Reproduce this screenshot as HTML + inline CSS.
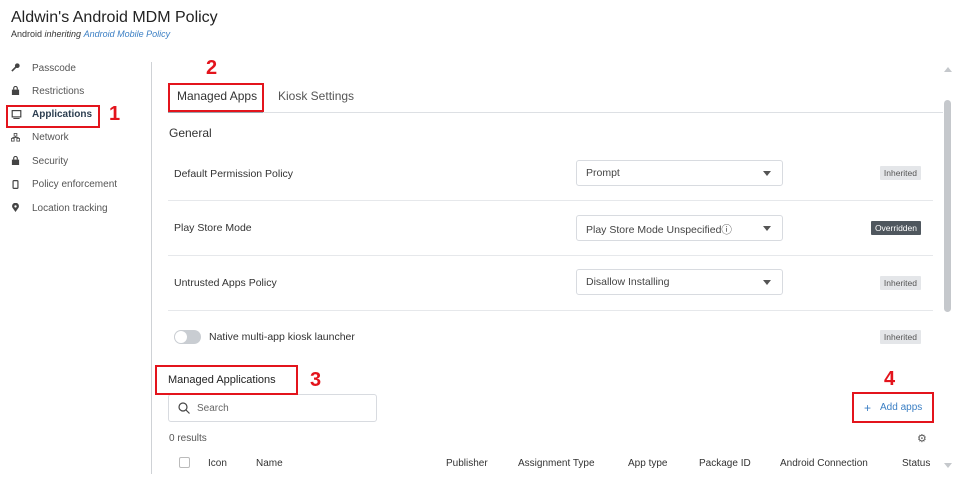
<!DOCTYPE html>
<html><head><meta charset="utf-8"><style>
*{margin:0;padding:0;box-sizing:border-box}
body{width:975px;height:495px;background:#fff;font-family:"Liberation Sans",sans-serif;color:#333;position:relative;overflow:hidden}
.a{position:absolute;white-space:nowrap}
.nav{font-size:10px;color:#555}
.ic{position:absolute;left:11px;width:9px;height:9px}
.red{position:absolute;border:2.5px solid #e3141c}
.num{position:absolute;color:#e3141c;font-weight:bold;font-size:20px}
.lbl{font-size:10.5px;color:#333}
.sel{position:absolute;left:576px;width:207px;height:26px;border:1px solid #d8dbe0;border-radius:3px;font-size:10.5px;color:#444;padding:6px 9px}
.sel:after{content:"";position:absolute;right:11px;top:10px;border-left:4px solid transparent;border-right:4px solid transparent;border-top:5px solid #555}
.sep{position:absolute;left:168px;width:765px;height:1px;background:#e6e8eb}
.bd{position:absolute;right:54px;font-size:8.5px;padding:2px 4px;background:#e4e6e9;color:#555;border-radius:1px}
.th{position:absolute;top:458px;font-size:10px;color:#333}
</style></head><body>
<div class="a" style="left:11px;top:9px;font-size:16px;color:#222">Aldwin's Android MDM Policy</div>
<div class="a" style="left:11px;top:29px;font-size:9px;color:#333">Android <i>inheriting</i> <i style="color:#3b7fc4">Android Mobile Policy</i></div>

<svg class="ic" style="top:63px" viewBox="0 0 10 10"><circle cx="7" cy="3" r="2.6" fill="#444"/><path d="M6 4 L1 9" stroke="#444" stroke-width="1.8"/></svg>
<div class="a nav" style="left:32px;top:63px">Passcode</div>
<svg class="ic" style="top:86px" viewBox="0 0 10 10"><rect x="1" y="4" width="8" height="6" fill="#444"/><path d="M3 4V2.5a2 2 0 0 1 4 0V4" stroke="#444" fill="none" stroke-width="1.3"/></svg>
<div class="a nav" style="left:32px;top:86px">Restrictions</div>
<svg class="ic" style="top:110px;width:11px" viewBox="0 0 11 10"><rect x="0.7" y="0.7" width="9.6" height="7" fill="none" stroke="#333" stroke-width="1.2"/><path d="M2 9.5h7" stroke="#333"/></svg>
<div class="a nav" style="left:32px;top:109px;font-weight:bold;color:#2c3e50">Applications</div>
<svg class="ic" style="top:133px" viewBox="0 0 10 10" fill="none" stroke="#555"><rect x="3.5" y="0.5" width="3" height="3"/><rect x="0.5" y="6" width="3" height="3"/><rect x="6.5" y="6" width="3" height="3"/><path d="M5 3.5v1.5M2 6V5h6v1"/></svg>
<div class="a nav" style="left:32px;top:132px">Network</div>
<svg class="ic" style="top:156px" viewBox="0 0 10 10"><rect x="1" y="4" width="8" height="6" fill="#444"/><path d="M3 4V2.5a2 2 0 0 1 4 0V4" stroke="#444" fill="none" stroke-width="1.3"/></svg>
<div class="a nav" style="left:32px;top:156px">Security</div>
<svg class="ic" style="top:180px" viewBox="0 0 10 10"><rect x="2.3" y="0.7" width="5.4" height="8.6" rx="1" fill="none" stroke="#444" stroke-width="1.3"/></svg>
<div class="a nav" style="left:32px;top:179px">Policy enforcement</div>
<svg class="ic" style="top:203px" viewBox="0 0 10 10"><path d="M5 10 L1.5 5 A3.8 3.8 0 1 1 8.5 5Z" fill="#444"/><circle cx="5" cy="3.8" r="1.3" fill="#fff"/></svg>
<div class="a nav" style="left:32px;top:203px">Location tracking</div>

<div class="a" style="left:151px;top:62px;width:1px;height:412px;background:#cfd2d6"></div>

<div class="a" style="left:177px;top:89px;font-size:12px;color:#333">Managed Apps</div>
<div class="a" style="left:278px;top:89px;font-size:12px;color:#555">Kiosk Settings</div>
<div class="a" style="left:168px;top:112px;width:775px;height:1px;background:#dde0e4"></div>
<div class="a" style="left:168px;top:111px;width:95px;height:2px;background:#9aa3ad"></div>

<div class="a" style="left:169px;top:126px;font-size:12px;color:#333">General</div>

<div class="a lbl" style="left:174px;top:168px">Default Permission Policy</div>
<div class="sel" style="top:160px">Prompt</div>
<div class="bd" style="top:166px">Inherited</div>
<div class="sep" style="top:200px"></div>

<div class="a lbl" style="left:174px;top:222px">Play Store Mode</div>
<div class="sel" style="top:215px">Play Store Mode Unspecified&#9432;</div>
<div class="bd" style="top:221px;background:#4f575e;color:#fff">Overridden</div>
<div class="sep" style="top:255px"></div>

<div class="a lbl" style="left:174px;top:277px">Untrusted Apps Policy</div>
<div class="sel" style="top:269px">Disallow Installing</div>
<div class="bd" style="top:276px">Inherited</div>
<div class="sep" style="top:310px"></div>

<div class="a" style="left:174px;top:330px;width:27px;height:14px;border-radius:7px;background:#c9cdd2"></div>
<div class="a" style="left:175px;top:331px;width:12px;height:12px;border-radius:6px;background:#fff"></div>
<div class="a lbl" style="left:209px;top:331px">Native multi-app kiosk launcher</div>
<div class="bd" style="top:330px">Inherited</div>

<div class="a" style="left:168px;top:374px;font-size:11px;color:#222">Managed Applications</div>
<div class="a" style="left:168px;top:394px;width:209px;height:28px;border:1px solid #d8dbe0;border-radius:3px"></div>
<svg class="a" style="left:178px;top:402px" width="12" height="12" viewBox="0 0 12 12" fill="none" stroke="#444" stroke-width="1.2"><circle cx="5" cy="5" r="4"/><path d="M8 8l3.5 3.5"/></svg>
<div class="a" style="left:197px;top:403px;font-size:10px;color:#666">Search</div>

<div class="a" style="left:864px;top:401px;font-size:12px;color:#3b7fc4">+</div>
<div class="a" style="left:880px;top:402px;font-size:10px;color:#3b7fc4">Add apps</div>

<div class="a" style="left:169px;top:433px;font-size:10px;color:#555">0 results</div>
<div class="a" style="left:917px;top:432px;font-size:11px;color:#555">&#9881;</div>

<div class="a" style="left:179px;top:457px;width:11px;height:11px;border:1px solid #bbb;border-radius:2px"></div>
<div class="th" style="left:208px">Icon</div>
<div class="th" style="left:256px">Name</div>
<div class="th" style="left:446px">Publisher</div>
<div class="th" style="left:518px">Assignment Type</div>
<div class="th" style="left:628px">App type</div>
<div class="th" style="left:699px">Package ID</div>
<div class="th" style="left:780px">Android Connection</div>
<div class="th" style="left:902px">Status</div>

<div class="a" style="left:944px;top:67px;border-left:4px solid transparent;border-right:4px solid transparent;border-bottom:5px solid #c5c8cc"></div>
<div class="a" style="left:944px;top:100px;width:7px;height:212px;border-radius:4px;background:#c5c8cc"></div>
<div class="a" style="left:944px;top:463px;border-left:4px solid transparent;border-right:4px solid transparent;border-top:5px solid #c5c8cc"></div>

<div class="red" style="left:6px;top:105px;width:94px;height:23px"></div>
<div class="num" style="left:109px;top:103px">1</div>
<div class="red" style="left:168px;top:83px;width:96px;height:29px"></div>
<div class="num" style="left:206px;top:57px">2</div>
<div class="red" style="left:155px;top:365px;width:143px;height:30px"></div>
<div class="num" style="left:310px;top:369px">3</div>
<div class="red" style="left:852px;top:392px;width:82px;height:31px"></div>
<div class="num" style="left:884px;top:368px">4</div>
</body></html>
